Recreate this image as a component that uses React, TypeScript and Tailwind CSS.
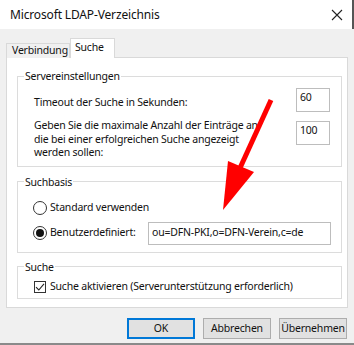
import React from "react";

const font = { fontFamily: '"Noto Sans", "Open Sans", sans-serif' };

const Radio = ({ checked }: { checked?: boolean }) => (
  <span className="w-[14px] h-[14px] rounded-full border border-[#333] bg-white flex items-center justify-center shrink-0">
    {checked && <span className="w-[8px] h-[8px] rounded-full bg-[#111]" />}
  </span>
);

const Button = ({ label, primary }: { label: string; primary?: boolean }) => (
  <button
    className={`w-[68px] h-[21px] text-[10.5px] tracking-[-0.2px] text-[#111] bg-[#e1e1e1] border ${
      primary ? "border-[#0078d7] shadow-[inset_0_0_0_1px_#0078d7]" : "border-[#adadad]"
    }`}
  >
    {label}
  </button>
);

export default function App() {
  return (
    <div className="relative w-[354px] h-[345px] bg-[#f0f0f0] flex flex-col overflow-hidden text-[#111]" style={font}>
      {/* Title bar */}
      <div className="h-[29px] bg-white flex items-center pl-[10px] shrink-0">
        <span className="text-[12px] tracking-[-0.15px]">Microsoft LDAP-Verzeichnis</span>
        <svg className="ml-auto mr-[9px]" width="12" height="12" viewBox="0 0 12 12">
          <path d="M1 1L11 11M11 1L1 11" stroke="#222" strokeWidth="1.1" />
        </svg>
        <div className="w-[2px] h-full bg-[#555]" />
      </div>

      {/* Tabs */}
      <div className="flex items-end pl-[6px] pt-[9px] relative z-10 text-[10.5px] tracking-[-0.2px]">
        <div className="w-[64px] h-[15px] border border-b-0 border-[#d9d9d9] bg-[#f0f0f0] leading-[13px] pl-[5px]">
          Verbindung
        </div>
        <div className="w-[45px] h-[20px] border border-b-0 border-[#d9d9d9] bg-white leading-[15px] pl-[4px] pt-[1px]">
          Suche
        </div>
      </div>

      {/* Tab page */}
      <div className="-mt-px mx-[6px] h-[251px] border border-[#d9d9d9] bg-white pl-[10px] pr-[5px] pt-[11px] text-[10.5px] tracking-[-0.2px]">
        <fieldset className="border border-[#dcdcdc] pb-[6px]">
          <legend className="ml-[6px] px-[1px] leading-[14px]">Servereinstellungen</legend>
          <div className="flex justify-between pl-[16px] pr-[11px] mt-[5px]">
            <span className="pt-[7px] leading-[14px]">Timeout der Suche in Sekunden:</span>
            <div className="w-[34px] h-[24px] border border-[#bdbdbd] pl-[3px] pt-[1px] leading-[14px]">60</div>
          </div>
          <div className="flex justify-between pl-[16px] pr-[11px] mt-[7px]">
            <span className="leading-[13.5px]">
              Geben Sie die maximale Anzahl der Einträge an
              <br />
              die bei einer erfolgreichen Suche angezeigt
              <br />
              werden sollen:
            </span>
            <div className="mt-[2px] w-[34px] h-[24px] border border-[#bdbdbd] pl-[3px] pt-[1px] leading-[14px]">100</div>
          </div>
        </fieldset>

        <fieldset className="border border-[#dcdcdc] mt-[8px] pb-[7px]">
          <legend className="ml-[6px] px-[1px] leading-[14px]">Suchbasis</legend>
          <div className="flex items-center gap-[3px] pl-[15px] mt-[12px] h-[14px]">
            <Radio />
            <span>Standard verwenden</span>
          </div>
          <div className="flex items-center pl-[15px] pr-[10px] mt-[7px] h-[23px]">
            <Radio checked />
            <span className="ml-[3px]">Benutzerdefiniert:</span>
            <div className="ml-auto w-[183px] h-[23px] border border-[#bdbdbd] pl-[3px] flex items-center">
              ou=DFN-PKI,o=DFN-Verein,c=de
            </div>
          </div>
        </fieldset>

        <fieldset className="border border-[#dcdcdc] mt-[7px] pb-[5px]">
          <legend className="ml-[6px] px-[1px] leading-[14px]">Suche</legend>
          <div className="flex items-center gap-[4px] pl-[16px] mt-[7px] h-[12px]">
            <span className="w-[12px] h-[12px] border border-[#333] bg-white flex items-center justify-center">
              <svg width="10" height="10" viewBox="0 0 10 10">
                <path d="M1 5.2L3.8 8L9 1.8" fill="none" stroke="#222" strokeWidth="1.1" />
              </svg>
            </span>
            <span>Suche aktivieren (Serverunterstützung erforderlich)</span>
          </div>
        </fieldset>
      </div>

      {/* Buttons */}
      <div className="flex justify-end gap-[8px] pr-[7px] mt-[10px]">
        <Button label="OK" primary />
        <Button label="Abbrechen" />
        <Button label="Übernehmen" />
      </div>

      <div className="mt-auto h-[2px] bg-[#8a8a8a]" />

      {/* Red annotation arrow */}
      <svg className="absolute inset-0 pointer-events-none" width="354" height="345" viewBox="0 0 354 345">
        <line x1="271" y1="100" x2="240" y2="168" stroke="#f00" strokeWidth="5" />
        <polygon points="228,161 254,172 223,210" fill="#f00" />
      </svg>
    </div>
  );
}
